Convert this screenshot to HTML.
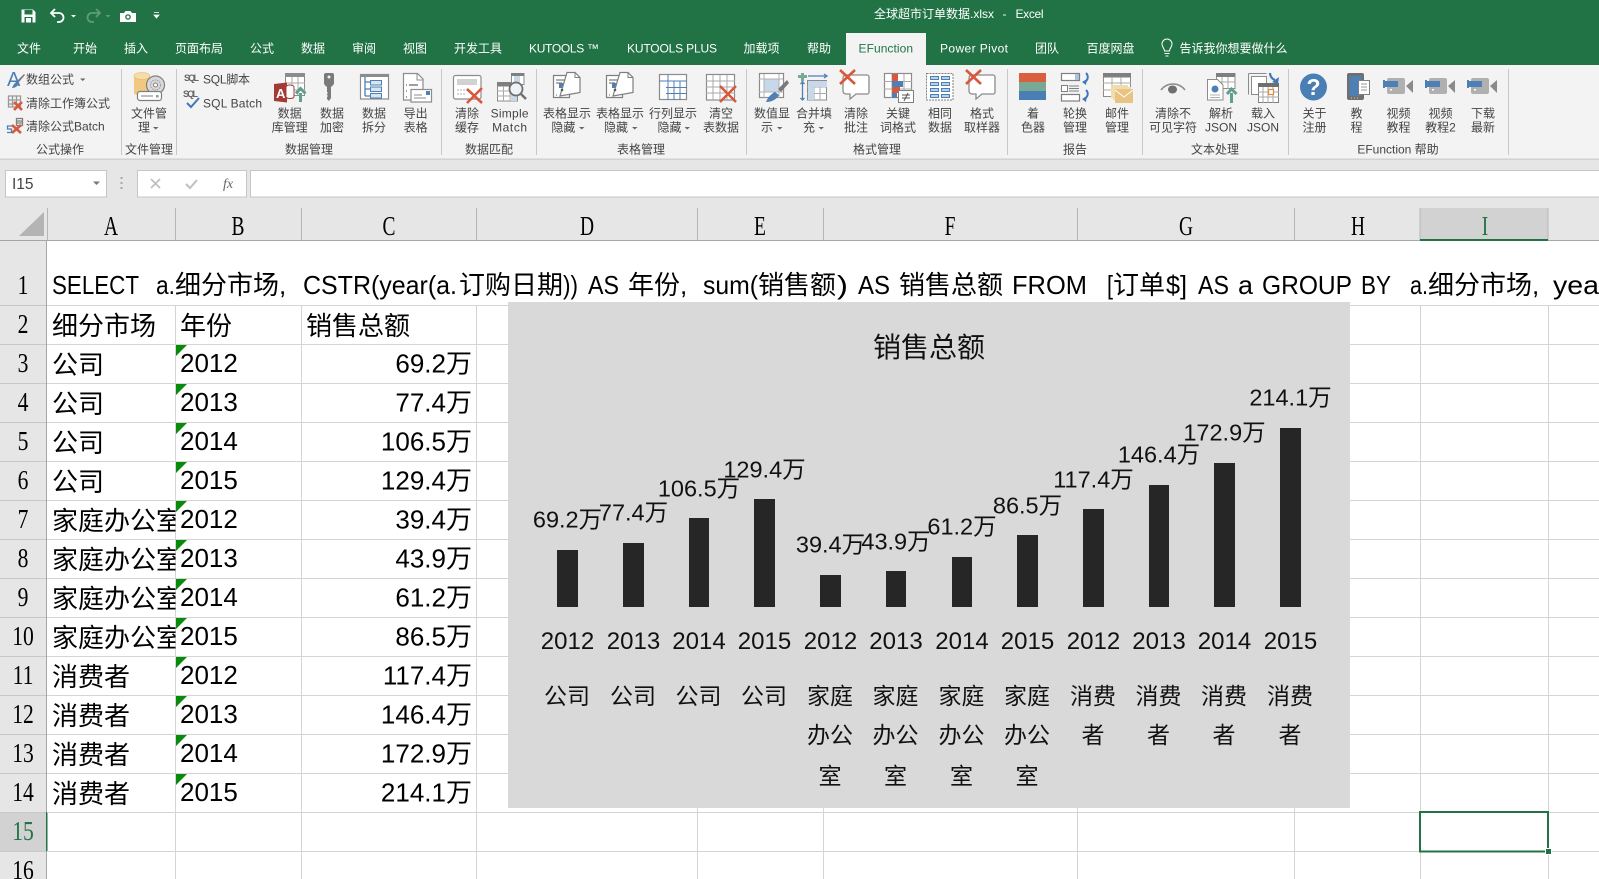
<!DOCTYPE html>
<html lang="zh"><head><meta charset="utf-8"><title>全球超市订单数据.xlsx - Excel</title>
<style>
html,body{margin:0;padding:0;width:1599px;height:879px;overflow:hidden;background:#fff}
svg{display:block;font-family:"Liberation Sans","Noto Sans CJK SC",sans-serif}
.tab{font-size:12px;fill:#fff}
.r{font-size:12px;fill:#444}
.m{text-anchor:middle}
.c{font-size:26px;fill:#000}
.e{text-anchor:end}
.h{font-family:"Liberation Serif",serif;font-size:27px;fill:#000;text-anchor:middle}
.lab{font-size:23.5px;fill:#111;text-anchor:middle}
.yr{font-size:24px;fill:#111;text-anchor:middle}
.cat{font-size:23px;fill:#111;text-anchor:middle}
.gl{stroke:#d4d4d4;stroke-width:1}
.g{fill:none;stroke:#7f7f7f;stroke-width:1.3}
.x{fill:none;stroke:#d9583b;stroke-width:2.6}
.b{fill:none;stroke:#4e7fb5;stroke-width:1.3}
</style></head><body>
<svg width="1599" height="879" viewBox="0 0 1599 879" xmlns="http://www.w3.org/2000/svg">
<defs>
<clipPath id="ca"><rect x="47" y="300" width="128.5" height="560"/></clipPath>
<g id="bubble"><path d="M1 5a3 3 0 0 1 3-3h21a2 2 0 0 1 2 2v15a2 2 0 0 1-2 2H14l-6 5v-5H4a3 3 0 0 1-3-3z" fill="#fff" stroke="#8c8c8c" stroke-width="1.3"/><path d="M-2-3L13 11M13-3L-2 11" class="x" stroke-width="2.8"/></g>
<g id="cam"><rect x="4" y="0" width="18" height="16" rx="2" fill="#b0b0b0"/><path d="M23 8l7-6v13z" fill="#8a8a8a"/><rect x="0" y="2" width="2" height="8" fill="#4e7fb5"/><rect x="2" y="3" width="13" height="6" fill="#4e7fb5"/><rect x="7" y="11" width="2" height="1.5" fill="#fff"/></g>
<g id="dsp"><path d="M.5 3.5h16v22H.5zM3 8h10M3 11h6M3 23h1" fill="#fff" stroke="#7f7f7f" stroke-width="1.2"/><rect x="6" y="11" width="8" height="5" fill="#4e7fb5"/><path d="M14 .5h8l5 5v15L7 24z" fill="#fff" stroke="#7f7f7f" stroke-width="1.2"/><path d="M22 .5v5h5" fill="none" stroke="#7f7f7f"/><circle cx="9" cy="18" r="1.3" fill="#555"/></g>
</defs>

<!-- chrome backgrounds -->
<rect width="1599" height="65" fill="#217346"/>
<rect x="846" y="33" width="80" height="32" fill="#f3f3f3"/>
<rect y="65" width="1599" height="94" fill="#f3f3f3"/>
<rect y="158.500" width="1599" height="1.500" fill="#d2d2d2"/>
<rect y="160" width="1599" height="48" fill="#e6e6e6"/>

<!-- quick access -->
<path d="M21.500 9.500h11.500l2.500 2.500v10.500h-14z" fill="#fff"/><rect x="24.500" y="10" width="8" height="4.500" fill="#217346"/><rect x="24.500" y="17" width="8" height="5.500" fill="#217346"/><rect x="26" y="18" width="5" height="4.500" fill="#fff"/>
<path d="M55 9l-4 4 4 4M51.500 13H59a4.500 4.500 0 0 1 0 9h-2" fill="none" stroke="#fff" stroke-width="1.800"/><path d="M71 15h5l-2.500 2.500z" fill="#fff"/>
<path d="M96 9l4 4-4 4M99.500 13H92a4.500 4.500 0 0 0 0 9h2" fill="none" stroke="#5f9b7b" stroke-width="1.800"/><path d="M105.500 15h5l-2.500 2.500z" fill="#5f9b7b"/>
<path d="M120 13h4l1.500-2h5l1.500 2h4v9h-16z" fill="#fff"/><circle cx="128" cy="17" r="2.800" fill="#217346"/><circle cx="128" cy="17" r="1.500" fill="#fff"/>
<path d="M154 12.500h5M154 15h5l-2.500 3z" fill="#fff" stroke="#fff" stroke-width=".8"/>
<text x="874" y="18" font-size="12" fill="#fff" textLength="120" lengthAdjust="spacing">全球超市订单数据.xlsx</text><text x="1002.500" y="18" font-size="12" fill="#fff">-</text><text x="1015.500" y="18" font-size="12" fill="#fff" textLength="28">Excel</text>

<!-- tabs -->
<g class="tab">
<text x="17" y="52.500">文件</text><text x="73" y="52.500">开始</text><text x="124" y="52.500">插入</text><text x="175" y="52.500">页面布局</text><text x="250" y="52.500">公式</text><text x="301" y="52.500">数据</text><text x="352" y="52.500">审阅</text><text x="403" y="52.500">视图</text><text x="454" y="52.500">开发工具</text>
<text x="529" y="52.500" textLength="70">KUTOOLS ™</text><text x="627" y="52.500" textLength="90">KUTOOLS PLUS</text><text x="743.500" y="52.500">加载项</text><text x="807" y="52.500">帮助</text>
<text x="858.500" y="52.500" textLength="54.500" style="fill:#217346">EFunction</text><text x="940" y="52.500" textLength="68">Power Pivot</text><text x="1035" y="52.500">团队</text><text x="1086.500" y="52.500">百度网盘</text><text x="1179.500" y="52.500">告诉我你想要做什么</text>
</g>
<path d="M1164.500 51c0-3-2.500-3.500-2.500-7a5 5 0 0 1 10 0c0 3.500-2.500 4-2.500 7zM1164.500 53.500h5M1165.500 56h3" fill="none" stroke="#fff" stroke-width="1"/>

<!-- ribbon separators -->
<g stroke="#c9c9c9" stroke-width="1">
<path d="M121.500 69v86M176.500 69v86M441.500 69v86M536.500 69v86M746.500 69v86M1007.500 69v86M1142.500 69v86M1288.500 69v86M1508.500 69v86"/>
</g>

<!-- ribbon left items -->
<g class="r">
<text x="26" y="83.500">数组公式</text><text x="26" y="107.500">清除工作簿公式</text><text x="26" y="130.500">清除公式Batch</text>
<text x="203" y="83.500" textLength="47">SQL脚本</text><text x="203" y="107.500" textLength="59">SQL Batch</text>
<text x="184" y="81" style="font-size:9px;font-weight:bold;fill:#666" textLength="15">SQL</text><text x="183" y="97" style="font-size:9px;font-weight:bold;fill:#666" textLength="15">SQL</text>
</g>
<path d="M80 78.500h5.500l-2.750 2.500z" fill="#666"/>
<path d="M187 103l4 4 8-9" fill="none" stroke="#3f78b8" stroke-width="2"/>
<!-- A brush -->
<text x="7" y="86" font-size="20" fill="#4e7fb5">A</text><path d="M24 74l1 1-6 7-2-1z" fill="#7a7a7a"/><path d="M12 88c1-3 3-5 5-7l2 1c0 3-3 6-7 6z" fill="#4e7fb5"/>
<!-- grid x -->
<g class="g" stroke-width="1"><path d="M8.500 96h12v11h-12zM8.500 100h12M8.500 104h12M12.500 96v11M16.500 96v11" stroke="#999"/></g><path d="M14 102l8 8M22 102l-8 8" class="x" stroke-width="2"/>
<!-- batch -->
<path d="M16.500 118.500h6v7h-6zM17 121h5M17 123h5" class="g" stroke-width="1"/><path d="M12 125l9 8M21 125l-9 8" class="x" stroke-width="2"/><path d="M12 126H7.500v3h4v3.500H7" class="b"/>

<!-- file manager -->
<path d="M134 76v17c0 2 7 3 8 3h8V76z" fill="#efc97f"/><ellipse cx="142" cy="76" rx="8" ry="3.500" fill="#f5dca9" stroke="#e0b869" stroke-width=".6"/>
<circle cx="155.500" cy="85" r="9" fill="#d9d9d9" stroke="#7f7f7f" stroke-width="1.200"/><circle cx="155.500" cy="85" r="5" fill="none" stroke="#9c9c9c" stroke-dasharray="1.500 1"/><circle cx="155.500" cy="85" r="2" fill="#fff" stroke="#7f7f7f"/>
<rect x="137.500" y="91.500" width="24" height="9" rx="2.500" fill="#fff" stroke="#7f7f7f" stroke-width="1.200"/><path d="M141 96h12" stroke="#7f7f7f"/><rect x="156" y="95" width="2.500" height="2.500" fill="#7aa895"/>

<!-- access -->
<rect x="285.500" y="73.500" width="19" height="22" fill="#fff" stroke="#8c8c8c"/><rect x="285" y="73" width="20" height="4" fill="#8c8c8c"/><path d="M285 83h20M285 90h20M292 77v18M298 77v18" stroke="#aaa"/>
<path d="M274 84l13-1.500v20L274 101z" fill="#a33a36"/><text x="276" y="98" font-size="13" font-weight="bold" fill="#fff">A</text>
<ellipse cx="290" cy="87" rx="4" ry="2" fill="#fff" stroke="#a33a36"/><path d="M286 87v10c1 2 7 2 8 0V87" fill="#fff" stroke="#a33a36"/>
<path d="M300.500 102v-9M296 93.500l4.500-5 5 5" fill="none" stroke="#5f9f8d" stroke-width="3"/>
<!-- key -->
<path d="M324 75a2 2 0 0 1 2-2h6a2 2 0 0 1 2 2v8c0 2-2 3-3 4v11l-2 3-2-2v-2l1-1-1-1v-1l1-1-1-1v-5c-1-1-3-2-3-4z" fill="#7a7a7a"/><circle cx="329" cy="77" r="1.500" fill="#f3f3f3"/>
<!-- split -->
<rect x="360.500" y="74.500" width="28" height="24.500" fill="#fff" stroke="#8c8c8c" stroke-width="1.200"/><rect x="360" y="74" width="29" height="3" fill="#8c8c8c"/>
<path d="M365 77v19M365 82h5M365 89h5M365 96h5" class="b"/><g fill="#d8e4f0" stroke="#4e7fb5"><rect x="370.500" y="80.500" width="11" height="4.500"/><rect x="370.500" y="87" width="11" height="4.500"/><rect x="370.500" y="93.500" width="11" height="4.500"/></g>
<!-- export -->
<path d="M403.500 73.500h14l5.500 5.500v21h-19.500z" fill="#fff" stroke="#8c8c8c" stroke-width="1.200"/><path d="M417 73.500V80h6" fill="none" stroke="#8c8c8c"/>
<path d="M406 85h1M409 85h9M406 91h1M406 97h1" stroke="#7f7f7f" stroke-width="1.500"/>
<rect x="411" y="89.500" width="20.500" height="12.500" fill="#fff" stroke="#8c8c8c" stroke-width="1.200"/><rect x="426" y="91" width="4" height="4" fill="#4e7fb5"/><path d="M414 95h8M414 98h12" stroke="#8c8c8c"/>
<!-- clear cache -->
<rect x="453.500" y="75.500" width="27.500" height="23.500" rx="2" fill="#fff" stroke="#8c8c8c" stroke-width="1.200"/><rect x="457" y="79" width="20" height="6" fill="#d2d2d2"/><path d="M457 90h10M457 94h8" stroke="#b0b0b0" stroke-dasharray="2 1"/>
<path d="M467 89l15 14M482 88l-15 15" class="x" stroke-width="2.800"/>
<!-- simple match -->
<rect x="497.500" y="82.500" width="20" height="18.500" fill="#fff" stroke="#8c8c8c"/><rect x="497" y="82" width="14" height="4.500" fill="#7f7f7f"/><path d="M497 91h20M497 96h20M503.500 86v15M510 86v15" stroke="#aaa"/><rect x="511" y="92" width="6" height="9" fill="#c6d8ea"/>
<rect x="511.500" y="73.500" width="12.500" height="11" fill="#fff" stroke="#8c8c8c"/><rect x="511" y="73" width="13" height="3" fill="#7f7f7f"/><rect x="514" y="76" width="6" height="8" fill="#c6d8ea"/>
<circle cx="516" cy="89" r="6.500" fill="#eef3f8" stroke="#6f6f6f" stroke-width="1.800"/><path d="M521 94l5 5" stroke="#6f6f6f" stroke-width="2.400"/>
<!-- display hide -->
<use href="#dsp" x="553" y="72"/><use href="#dsp" x="606" y="72"/>
<!-- row col -->
<rect x="659.500" y="74.500" width="27" height="25" fill="#fff" stroke="#8c8c8c" stroke-width="1.200"/><path d="M659 81h28M668 75v25M666 87.500h21M666 93.500h21M674 81v19M680 81v19" stroke="#4e7fb5"/>
<!-- clear table -->
<rect x="706.500" y="74.500" width="28" height="25.500" fill="#fff" stroke="#8c8c8c" stroke-width="1.200"/><path d="M706 81h29M706 87h29M706 93h29M713 75v25M720 75v25M727 75v25" stroke="#aaa"/>
<path d="M720 86l16 16M736 86l-16 16" class="x" stroke-width="2.800"/>
<!-- value display -->
<rect x="759.500" y="73.500" width="24" height="24" fill="#fff" stroke="#8c8c8c" stroke-width="1.200"/><rect x="764" y="79" width="15" height="13" fill="#c6d8ea"/><path d="M759 79h24M759 92h24M764 74v24M779 74v24" stroke="#b0b0b0"/>
<path d="M787 80l-9 9 3 3 8-9z" fill="#7a7a7a"/><path d="M766 102c2-5 5-8 9-10l4 3c-2 4-7 7-13 7z" fill="#4e7fb5"/>
<!-- merge -->
<path d="M798 76.500h9M802.500 73v8.500" stroke="#7aa895" stroke-width="3"/><path d="M808 76h19M824 74l3 2-3 2" class="b"/><rect x="807.500" y="80.500" width="19" height="19.500" fill="#fff" stroke="#8c8c8c"/><path d="M807 87h20M807 93.500h20M814 81v19M820 81v19" stroke="#aaa"/><rect x="808" y="81" width="6" height="19" fill="#c6d8ea"/><rect x="808" y="81" width="19" height="6" fill="#c6d8ea"/>
<path d="M802.500 82v18M800.500 84l2-2 2 2M800.500 98l2 2 2-2" class="b"/>
<!-- bubbles -->
<use href="#bubble" x="842" y="73"/><use href="#bubble" x="968" y="73"/>
<!-- keyword -->
<rect x="884.500" y="73.500" width="27" height="24" fill="#fff" stroke="#8c8c8c" stroke-width="1.200"/><path d="M884 81.500h28M884 89h28M892 74v24M904 74v24" stroke="#aaa"/>
<rect x="892" y="74" width="6" height="7" fill="#d9583b"/><rect x="892" y="81" width="11" height="6" fill="#4e7fb5"/><rect x="892" y="87" width="8" height="6" fill="#d9583b"/><rect x="892" y="93" width="5" height="5" fill="#4e7fb5"/>
<rect x="898.500" y="90.500" width="15" height="12" fill="#fff" stroke="#7f7f7f"/><path d="M902 95h8M902 98h8M908 93l-4 8" stroke="#555"/>
<!-- same -->
<rect x="926.500" y="73.500" width="26.500" height="26.500" fill="#fff" stroke="#7f7f7f" stroke-dasharray="2 1"/>
<g fill="#b8d0e8" stroke="#4e7fb5"><rect x="930.500" y="76.500" width="8" height="3"/><rect x="941.500" y="76.500" width="8" height="3"/><rect x="930.500" y="82.500" width="8" height="3"/><rect x="941.500" y="82.500" width="8" height="3"/><rect x="930.500" y="88.500" width="8" height="3"/><rect x="941.500" y="88.500" width="8" height="3"/><rect x="930.500" y="94.500" width="8" height="3"/><rect x="941.500" y="94.500" width="8" height="3"/></g>
<!-- colour -->
<rect x="1019" y="73" width="27" height="9" fill="#d9603f"/><rect x="1019" y="82" width="27" height="9" fill="#7aa895"/><rect x="1019" y="91" width="27" height="9" fill="#4a7fb5"/>
<!-- rotate -->
<rect x="1061.500" y="73.500" width="18" height="7" fill="#fff" stroke="#7f7f7f" stroke-width="1.200"/><rect x="1075" y="74" width="4" height="6" fill="#a9c3de"/><rect x="1061.500" y="85.500" width="6" height="6" fill="#fff" stroke="#7f7f7f"/><path d="M1069 86h10M1069 88.500h10M1069 91h10" stroke="#7f7f7f"/><rect x="1061.500" y="94.500" width="18" height="6.500" fill="#fff" stroke="#7f7f7f" stroke-width="1.200"/>
<path d="M1086 73c3 3 2 8-2 9M1086 90c3 3 2 7-2 9" fill="none" stroke="#3f78b8" stroke-width="2"/><path d="M1087 79l-5 3 4 3zM1087 96l-5 3 4 3z" fill="#3f78b8"/>
<!-- mail -->
<rect x="1103.500" y="73.500" width="27" height="23" fill="#fff" stroke="#8c8c8c"/><rect x="1103" y="73" width="28" height="4.500" fill="#7f7f7f"/><path d="M1103 83h28M1103 90h28M1112 77v20M1121 77v20" stroke="#aaa"/>
<rect x="1111" y="85" width="17" height="13" fill="#f1dcae"/><rect x="1113" y="87" width="18" height="13" fill="#f1dcae"/><rect x="1115" y="89" width="18" height="14" fill="#e8c382"/><path d="M1115 90l9 7 9-7" fill="none" stroke="#fff"/>
<!-- eye -->
<path d="M1161 90c6-8 18-8 24 0" fill="none" stroke="#8c8c8c" stroke-width="1.600"/><ellipse cx="1172.500" cy="89.500" rx="4.500" ry="4" fill="#6f6f6f"/>
<!-- parse json -->
<rect x="1216.500" y="73.500" width="18.500" height="15" fill="#fff" stroke="#8c8c8c"/><rect x="1216" y="73" width="19" height="4" fill="#7f7f7f"/><path d="M1216 82h19M1222 77v12M1228 77v12" stroke="#aaa"/>
<path d="M1207.500 79.500h10l5.500 5.500v15h-15.500z" fill="#fff" stroke="#8c8c8c"/><circle cx="1215" cy="89" r="3.500" fill="#4e7fb5"/><path d="M1210 95h10M1210 97.500h10" stroke="#b0b0b0"/>
<path d="M1231.500 103v-10M1227 94l4.500-5 5 5" fill="none" stroke="#5f9f8d" stroke-width="3"/>
<!-- load json -->
<path d="M1248.500 73.500h18M1248.500 73.500v21M1251.500 76.500h15v18h-15z" fill="#fff" stroke="#8c8c8c"/><rect x="1258.500" y="83.500" width="20" height="19" fill="#fff" stroke="#7f7f7f"/><rect x="1258" y="83" width="21" height="4" fill="#6f6f6f"/><path d="M1258 92h21M1258 97h21M1263 87v16M1268 87v16M1273 87v16" stroke="#aaa"/><rect x="1268.500" y="89.500" width="5" height="5" fill="#fff" stroke="#e08a3c" stroke-width="1.200"/>
<path d="M1270 73c0 3 2 6 5 7" fill="none" stroke="#3f78b8" stroke-width="2.200"/><path d="M1279 77l-1 7-6-2z" fill="#3f78b8"/>
<!-- help -->
<circle cx="1313.500" cy="87" r="13.500" fill="#4a7fb5"/><text x="1313.500" y="95" text-anchor="middle" font-size="23" font-weight="bold" fill="#fff">?</text>
<!-- tablet -->
<rect x="1347" y="73" width="17" height="27" rx="2" fill="#6f6f6f"/><rect x="1349.500" y="76" width="12" height="20" fill="#4e7fb5"/><path d="M1351 98h1M1354 98h1M1357 98h1" stroke="#ccc"/><rect x="1358.500" y="80.500" width="11" height="14" fill="#fff" stroke="#7f7f7f"/><path d="M1361 84h6M1361 87h6M1361 90h6" stroke="#999"/>
<!-- cameras -->
<use href="#cam" x="1383" y="78"/><use href="#cam" x="1425" y="78"/><use href="#cam" x="1467" y="78"/>

<!-- ribbon button labels -->
<g class="r m">
<text x="149" y="117.500">文件管</text><text x="144" y="131.500">理</text>
<text x="289.600" y="117.500">数据</text><text x="289.600" y="131.500">库管理</text>
<text x="332" y="117.500">数据</text><text x="332" y="131.500">加密</text>
<text x="374" y="117.500">数据</text><text x="374" y="131.500">拆分</text>
<text x="415.600" y="117.500">导出</text><text x="415.600" y="131.500">表格</text>
<text x="467" y="117.500">清除</text><text x="467" y="131.500">缓存</text>
<text x="509.600" y="117.500" textLength="38">Simple</text><text x="509.600" y="131.500" textLength="35">Match</text>
<text x="567" y="117.500">表格显示</text><text x="563.400" y="131.500">隐藏</text>
<text x="620" y="117.500">表格显示</text><text x="616" y="131.500">隐藏</text>
<text x="673" y="117.500">行列显示</text><text x="669.500" y="131.500">隐藏</text>
<text x="721" y="117.500">清空</text><text x="721" y="131.500">表数据</text>
<text x="772" y="117.500">数值显</text><text x="767" y="131.500">示</text>
<text x="814" y="117.500">合并填</text><text x="809" y="131.500">充</text>
<text x="856" y="117.500">清除</text><text x="856" y="131.500">批注</text>
<text x="898" y="117.500">关键</text><text x="898" y="131.500">词格式</text>
<text x="940" y="117.500">相同</text><text x="940" y="131.500">数据</text>
<text x="982" y="117.500">格式</text><text x="982" y="131.500">取样器</text>
<text x="1033" y="117.500">着</text><text x="1033" y="131.500">色器</text>
<text x="1075" y="117.500">轮换</text><text x="1075" y="131.500">管理</text>
<text x="1117" y="117.500">邮件</text><text x="1117" y="131.500">管理</text>
<text x="1173" y="117.500">清除不</text><text x="1173" y="131.500">可见字符</text>
<text x="1221" y="117.500">解析</text><text x="1221" y="131.500" textLength="32">JSON</text>
<text x="1263" y="117.500">载入</text><text x="1263" y="131.500" textLength="32">JSON</text>
<text x="1314.500" y="117.500">关于</text><text x="1314.500" y="131.500">注册</text>
<text x="1356.500" y="117.500">教</text><text x="1356.500" y="131.500">程</text>
<text x="1398.500" y="117.500">视频</text><text x="1398.500" y="131.500">教程</text>
<text x="1440.500" y="117.500">视频</text><text x="1440.500" y="131.500">教程2</text>
<text x="1483" y="117.500">下载</text><text x="1483" y="131.500">最新</text>
<text x="60" y="153.500">公式操作</text><text x="149" y="153.500">文件管理</text><text x="309" y="153.500">数据管理</text><text x="489" y="153.500">数据匹配</text><text x="641" y="153.500">表格管理</text><text x="877" y="153.500">格式管理</text><text x="1075" y="153.500">报告</text><text x="1215" y="153.500">文本处理</text><text x="1398" y="153.500">EFunction 帮助</text>
</g>
<g fill="#666"><path d="M153 127h5.500l-2.750 2.500zM579 127h5.500l-2.750 2.500zM632 127h5.500l-2.750 2.500zM684.500 127h5.500l-2.750 2.500zM777 127h5.500l-2.750 2.500zM818.500 127h5.500l-2.750 2.500z"/></g>

<!-- formula bar -->
<rect x="5.500" y="170.500" width="101" height="26.500" fill="#fff" stroke="#c6c6c6"/>
<text x="12" y="189" font-size="15.500" fill="#444">I15</text><path d="M93 181.500h7l-3.500 3.500z" fill="#777"/>
<path d="M121.500 177v2M121.500 182v2M121.500 187v2" stroke="#a8a8a8" stroke-width="2"/>
<rect x="137.500" y="170.500" width="109" height="26.500" fill="#fff" stroke="#c6c6c6"/>
<rect x="250.500" y="170.500" width="1350" height="26.500" fill="#fff" stroke="#c6c6c6"/>
<path d="M151 179l9 9M160 179l-9 9" stroke="#c0c0c0" stroke-width="1.800" fill="none"/><path d="M186 184l4 4 7-8" stroke="#c0c0c0" stroke-width="2" fill="none"/>
<text x="223" y="188" font-family="Liberation Serif" font-style="italic" font-size="14" fill="#666">fx</text>

<!-- headers -->
<rect y="208" width="1599" height="32" fill="#e6e6e6"/>
<rect y="240" width="47" height="639" fill="#e6e6e6"/>
<rect x="1420" y="208" width="128" height="32" fill="#d2d2d2"/>
<rect y="812" width="47" height="39" fill="#d2d2d2"/>
<path d="M44 212v24H19z" fill="#b4b4b4"/>
<g stroke="#b5b5b5"><path d="M47.500 208v32M175.500 208v32M301.500 208v32M476.500 208v32M697.500 208v32M823.500 208v32M1077.500 208v32M1294.500 208v32M1420 208v32M1548 208v32"/></g>
<rect y="240" width="1599" height="1" fill="#a6a6a6"/>
<rect x="1420" y="239" width="128" height="2" fill="#217346"/>
<rect x="46" y="241" width="1" height="638" fill="#a6a6a6"/>
<rect x="46" y="812" width="1.500" height="39" fill="#217346"/>

<!-- grid -->
<g class="gl">
<path d="M47 305.500H1599M47 344.500H1599M47 383.500H1599M47 422.500H1599M47 461.500H1599M47 500.500H1599M47 539.500H1599M47 578.500H1599M47 617.500H1599M47 656.500H1599M47 695.500H1599M47 734.500H1599M47 773.500H1599M47 812.500H1599M47 851.500H1599"/>
<path d="M175.500 305V879M301.500 305V879M476.500 305V879M697.500 305V879M823.500 305V879M1077.500 305V879M1294.500 305V879M1420.500 305V879M1548.500 305V879"/>
</g>
<g stroke="#c8c8c8"><path d="M0 305.500h46M0 344.500h46M0 383.500h46M0 422.500h46M0 461.500h46M0 500.500h46M0 539.500h46M0 578.500h46M0 617.500h46M0 656.500h46M0 695.500h46M0 734.500h46M0 773.500h46M0 812.500h46M0 851.500h46"/></g>

<!-- col labels -->
<g class="h">
<text transform="translate(111,235) scale(.72,1)">A</text><text transform="translate(238,235) scale(.72,1)">B</text><text transform="translate(389,235) scale(.72,1)">C</text><text transform="translate(587,235) scale(.72,1)">D</text><text transform="translate(760,235) scale(.72,1)">E</text><text transform="translate(950,235) scale(.72,1)">F</text><text transform="translate(1186,235) scale(.72,1)">G</text><text transform="translate(1358,235) scale(.72,1)">H</text><text transform="translate(1485,235) scale(.72,1)" style="fill:#217346">I</text>
<text transform="translate(23,294) scale(.8,1)">1</text><text transform="translate(23,333) scale(.8,1)">2</text><text transform="translate(23,372) scale(.8,1)">3</text><text transform="translate(23,411) scale(.8,1)">4</text><text transform="translate(23,450) scale(.8,1)">5</text><text transform="translate(23,489) scale(.8,1)">6</text><text transform="translate(23,528) scale(.8,1)">7</text><text transform="translate(23,567) scale(.8,1)">8</text><text transform="translate(23,606) scale(.8,1)">9</text><text transform="translate(23,645) scale(.8,1)">10</text><text transform="translate(23,684) scale(.8,1)">11</text><text transform="translate(23,723) scale(.8,1)">12</text><text transform="translate(23,762) scale(.8,1)">13</text><text transform="translate(23,801) scale(.8,1)">14</text><text transform="translate(23,840) scale(.8,1)" style="fill:#217346">15</text><text transform="translate(23,879) scale(.8,1)">16</text>
</g>

<!-- row 1 text -->
<g class="c" transform="translate(0,-.8)">
<text x="52" y="295" textLength="87" lengthAdjust="spacingAndGlyphs">SELECT</text>
<text x="156" y="295" textLength="19" lengthAdjust="spacingAndGlyphs">a.</text><text x="175" y="295">细分市场,</text>
<text x="303" y="295" textLength="154" lengthAdjust="spacingAndGlyphs">CSTR(year(a.</text><text x="459" y="295">订购日期</text><text x="563" y="295" textLength="15" lengthAdjust="spacingAndGlyphs">))</text>
<text x="588" y="295" textLength="31" lengthAdjust="spacingAndGlyphs">AS</text><text x="628" y="295">年份,</text>
<text x="703" y="295" textLength="55" lengthAdjust="spacingAndGlyphs">sum(</text><text x="758" y="295">销售额</text><text x="837" y="295" textLength="11" lengthAdjust="spacingAndGlyphs">)</text>
<text x="858" y="295" textLength="32" lengthAdjust="spacingAndGlyphs">AS</text><text x="899" y="295">销售总额</text>
<text x="1012" y="295" textLength="75" lengthAdjust="spacingAndGlyphs">FROM</text><text x="1107" y="295" textLength="6" lengthAdjust="spacingAndGlyphs">[</text><text x="1113" y="295">订单</text><text x="1166" y="295" textLength="21" lengthAdjust="spacingAndGlyphs">$]</text>
<text x="1198" y="295" textLength="31" lengthAdjust="spacingAndGlyphs">AS</text><text x="1238" y="295" textLength="15" lengthAdjust="spacingAndGlyphs">a</text><text x="1262" y="295" textLength="90" lengthAdjust="spacingAndGlyphs">GROUP</text><text x="1361" y="295" textLength="30" lengthAdjust="spacingAndGlyphs">BY</text>
<text x="1410" y="295" textLength="18" lengthAdjust="spacingAndGlyphs">a.</text><text x="1428" y="295">细分市场,</text><text x="1553" y="295" textLength="46" lengthAdjust="spacingAndGlyphs">yea</text>
</g>

<!-- cells -->
<g class="c">
<text x="52" y="335">细分市场</text><text x="180" y="335">年份</text><text x="306" y="335">销售总额</text>
<g clip-path="url(#ca)">
<text x="52" y="374">公司</text><text x="52" y="413">公司</text><text x="52" y="452">公司</text><text x="52" y="491">公司</text>
<text x="52" y="530">家庭办公室</text><text x="52" y="569">家庭办公室</text><text x="52" y="608">家庭办公室</text><text x="52" y="647">家庭办公室</text>
<text x="52" y="686">消费者</text><text x="52" y="725">消费者</text><text x="52" y="764">消费者</text><text x="52" y="803">消费者</text>
</g>
<text x="180" y="372">2012</text><text x="180" y="411">2013</text><text x="180" y="450">2014</text><text x="180" y="489">2015</text><text x="180" y="528">2012</text><text x="180" y="567">2013</text><text x="180" y="606">2014</text><text x="180" y="645">2015</text><text x="180" y="684">2012</text><text x="180" y="723">2013</text><text x="180" y="762">2014</text><text x="180" y="801">2015</text>
<g text-anchor="end">
<text x="472" y="372.500">69.2万</text><text x="472" y="411.500">77.4万</text><text x="472" y="450.500">106.5万</text><text x="472" y="489.500">129.4万</text><text x="472" y="528.500">39.4万</text><text x="472" y="567.500">43.9万</text><text x="472" y="606.500">61.2万</text><text x="472" y="645.500">86.5万</text><text x="472" y="684.500">117.4万</text><text x="472" y="723.500">146.4万</text><text x="472" y="762.500">172.9万</text><text x="472" y="801.500">214.1万</text>
</g>
</g>
<g fill="#0a8a0a"><path d="M176 345h11l-11 11zM176 384h11l-11 11zM176 423h11l-11 11zM176 462h11l-11 11zM176 501h11l-11 11zM176 540h11l-11 11zM176 579h11l-11 11zM176 618h11l-11 11zM176 657h11l-11 11zM176 696h11l-11 11zM176 735h11l-11 11zM176 774h11l-11 11z"/></g>

<!-- selection -->
<rect x="1420" y="812" width="128" height="39.500" fill="none" stroke="#217346" stroke-width="2"/>
<rect x="1545.500" y="848.500" width="6" height="6" fill="#217346" stroke="#fff" stroke-width="1"/>

<!-- chart -->
<rect x="508" y="302" width="842" height="506" fill="#d9d9d9"/>
<text x="929" y="357" text-anchor="middle" font-size="28" fill="#111">销售总额</text>
<g fill="#262626">
<rect x="557" y="550" width="21" height="57"/><rect x="623" y="543" width="21" height="64"/><rect x="689" y="518" width="20" height="89"/><rect x="754" y="499" width="21" height="108"/><rect x="820" y="575" width="21" height="32"/><rect x="886" y="571" width="20" height="36"/><rect x="952" y="557" width="20" height="50"/><rect x="1017" y="535" width="21" height="72"/><rect x="1083" y="509" width="21" height="98"/><rect x="1149" y="485" width="20" height="122"/><rect x="1214" y="463" width="21" height="144"/><rect x="1280" y="428" width="21" height="179"/>
</g>
<g class="lab">
<text x="567.500" y="527.500">69.2万</text><text x="633.500" y="520.500">77.4万</text><text x="699" y="496.500">106.5万</text><text x="764.500" y="477.500">129.4万</text><text x="830.500" y="552.500">39.4万</text><text x="896" y="549.500">43.9万</text><text x="962" y="534.500">61.2万</text><text x="1027.500" y="513.500">86.5万</text><text x="1093.500" y="487.500">117.4万</text><text x="1159" y="462.500">146.4万</text><text x="1224.500" y="440.500">172.9万</text><text x="1290.500" y="405.500">214.1万</text>
</g>
<g class="yr">
<text x="567.500" y="649">2012</text><text x="633.500" y="649">2013</text><text x="699" y="649">2014</text><text x="764.500" y="649">2015</text><text x="830.500" y="649">2012</text><text x="896" y="649">2013</text><text x="962" y="649">2014</text><text x="1027.500" y="649">2015</text><text x="1093.500" y="649">2012</text><text x="1159" y="649">2013</text><text x="1224.500" y="649">2014</text><text x="1290.500" y="649">2015</text>
</g>
<g class="cat">
<text x="567" y="704">公司</text><text x="633" y="704">公司</text><text x="698.500" y="704">公司</text><text x="764" y="704">公司</text>
<text x="830" y="704">家庭</text><text x="895.500" y="704">家庭</text><text x="961.500" y="704">家庭</text><text x="1027" y="704">家庭</text>
<text x="830" y="743">办公</text><text x="895.500" y="743">办公</text><text x="961.500" y="743">办公</text><text x="1027" y="743">办公</text>
<text x="830" y="784">室</text><text x="895.500" y="784">室</text><text x="961.500" y="784">室</text><text x="1027" y="784">室</text>
<text x="1093" y="704">消费</text><text x="1158.500" y="704">消费</text><text x="1224" y="704">消费</text><text x="1290" y="704">消费</text>
<text x="1093" y="743">者</text><text x="1158.500" y="743">者</text><text x="1224" y="743">者</text><text x="1290" y="743">者</text>
</g>
</svg>
</body></html>
